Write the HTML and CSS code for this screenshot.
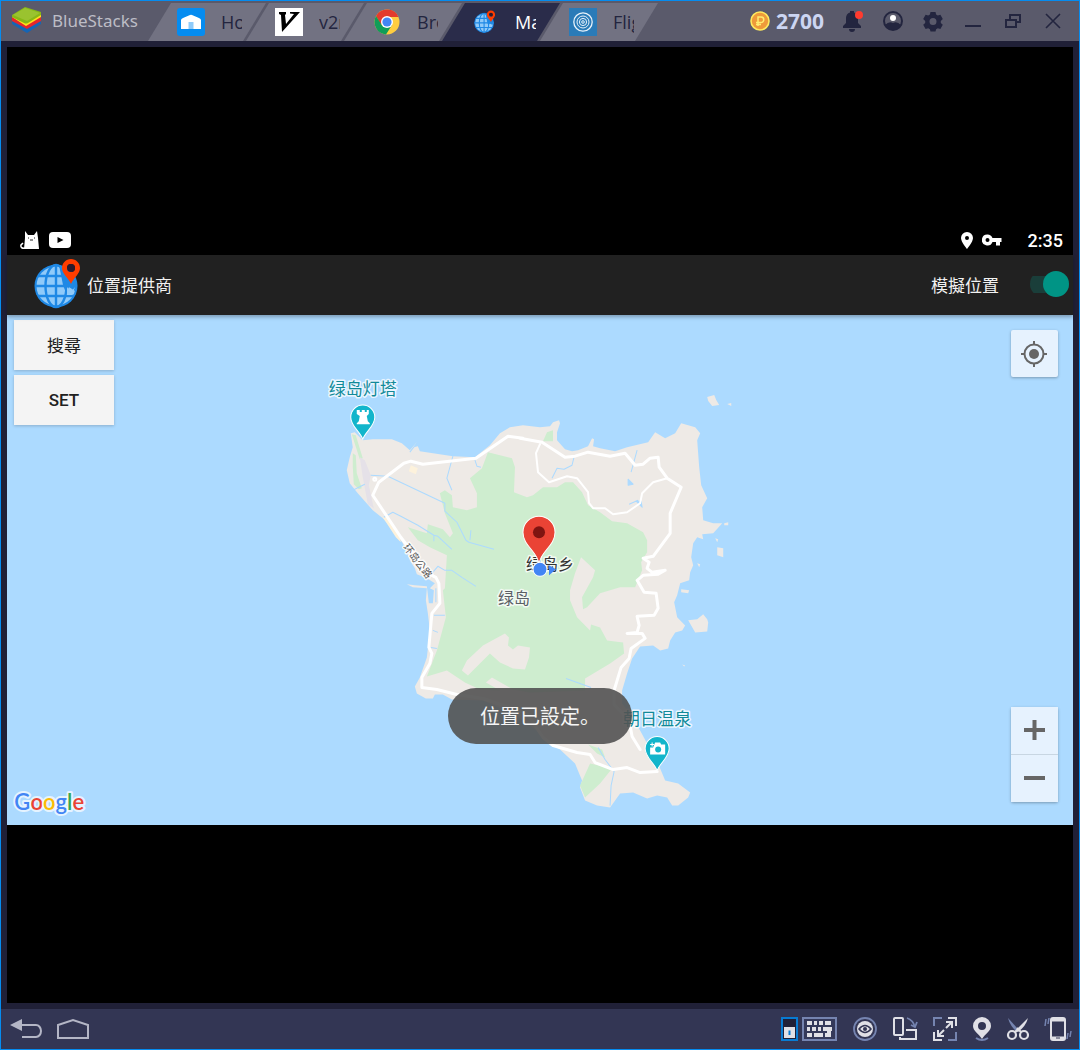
FILE: index.html
```html
<!DOCTYPE html>
<html lang="zh-Hant">
<head>
<meta charset="utf-8">
<meta name="viewport" content="width=device-width, initial-scale=1">
<title>BlueStacks</title>
<link rel="stylesheet" href="styles.css">
</head>
<body>
<svg class="defs" aria-hidden="true">
  <symbol id="globe" viewBox="0 0 48 50">
    <circle cx="22" cy="27" r="21.500" fill="#1e88e5"/>
    <circle cx="22" cy="27" r="19.500" fill="#90caf9"/>
    <g fill="none" stroke="#1e88e5" stroke-width="2.400">
      <path d="M22 6v42M1 27h42M4 17h36M4 37h36"/>
      <ellipse cx="22" cy="27" rx="10.500" ry="21"/>
    </g>
    <path fill="#1e88e5" d="M25 6l12 6 6 14-2 6-6-4-3 6-3-8z"/>
    <path fill="#90caf9" d="M33 28l4 5 4-5-3 8h-5z"/>
    <path fill="#ff3d00" fill-rule="evenodd" d="M37 0c-5 0-9 4-9 9 0 6 6 9 9 16 3-7 9-10 9-16 0-5-4-9-9-9zm0 5a4 4 0 1 1 0 8 4 4 0 0 1 0-8z"/>
    <circle cx="37" cy="9" r="4" fill="#2b1a2c"/>
  </symbol>
</svg>
<div class="window">
  <header class="titlebar">
    <div class="brand">
      <svg width="30" height="28" viewBox="0 0 30 28" aria-hidden="true">
        <path fill="#1565b5" d="M0 18l15 9 14-9v-3L15 21 0 15z"/>
        <path fill="#e5262b" d="M0 15l15 8 14-8v-4L15 18 0 11z"/>
        <path fill="#ffe01b" d="M0 11l14 9 15-9V8L14 16 0 9z"/>
        <path fill="#86b817" d="M0 9L13 1l16 5v3l-13 8q-2 1-4 0L0 11z"/>
        <path fill="#9ac32f" d="M1 9L13 2l15 5-13 8z"/>
      </svg>
      <span>BlueStacks</span>
    </div>
    <nav class="tabs">
      <button class="tab"><svg class="tab-icon" viewBox="0 0 28 28" aria-hidden="true"><rect width="28" height="28" rx="3" fill="#058cf0"/><path fill="#fff" d="M4 12q0-1 2-2l7-3q1-.5 2 0l7 3q2 1 2 2v9H4z"/><path fill="#8fcbfa" d="M11.500 14h5v7h-5z"/></svg><span class="tab-label">Home</span></button>
      <button class="tab"><svg class="tab-icon" viewBox="0 0 28 28" aria-hidden="true"><rect width="28" height="28" fill="#fff"/><path d="M4 4h7v2l-1 1 1 9L19 6l-4-.5V4h10L7 24 6 7 4 6z"/></svg><span class="tab-label">v2rayNG</span></button>
      <button class="tab"><svg class="tab-icon" viewBox="0 0 28 28" aria-hidden="true"><circle cx="14" cy="14" r="12.500" fill="#ffcd40"/><path fill="#e33b2e" d="M3 8a12.500 12.500 0 0 1 22.500 1H14L8 17z"/><path fill="#109d58" d="M3 8a12.500 12.500 0 0 0 10 18.500L19 17l-10 .500z"/><circle cx="14" cy="14" r="6" fill="#fff"/><circle cx="14" cy="14" r="4.600" fill="#4286f5"/></svg><span class="tab-label">Browser</span></button>
      <button class="tab active"><svg class="tab-icon" viewBox="0 0 28 28" aria-hidden="true"><use href="#globe" x="3" y="2" width="22" height="24"/></svg><span class="tab-label">Maps</span></button>
      <button class="tab"><svg class="tab-icon" viewBox="0 0 28 28" aria-hidden="true"><rect width="28" height="28" fill="#2a7bb8"/><g fill="none" stroke="#e7f2fa"><circle cx="14" cy="14" r="9.200" stroke-width="1.300"/><circle cx="14" cy="14" r="6"/><circle cx="14" cy="14" r="3.600"/><circle cx="14" cy="14" r="1.300"/></g></svg><span class="tab-label">Flights</span></button>
    </nav>
    <div class="actions">
      <button class="coins"><svg width="20" height="20" viewBox="0 0 20 20" aria-hidden="true"><circle cx="10" cy="10" r="9" fill="#ee9a3a" stroke="#ffe95e" stroke-width="1.600"/><path d="M8 15V6h3a2.500 2.500 0 0 1 0 5.500H6M6 13.500h5" fill="none" stroke="#ffed70" stroke-width="1.500"/></svg><span>2700</span></button>
      <button class="action" aria-label="Notifications"><svg viewBox="0 0 24 24"><path fill="#23253f" d="M2 19v-2l3-3V9a6 6 0 0 1 4-5.600V2h4v1.400A6 6 0 0 1 17 9v5l3 3v2zm6 1h6a3 3 0 0 1-6 0z"/><circle cx="18" cy="6" r="4" fill="#ff3b2f"/></svg></button>
      <button class="action" aria-label="Account"><svg viewBox="0 0 24 24"><circle cx="12" cy="12" r="9" fill="none" stroke="#23253f" stroke-width="2"/><circle cx="12" cy="9" r="3" fill="#fff"/><path fill="#23253f" d="M4 16q4-4 8-2 4-2 8 2-3 5-8 5t-8-5z"/></svg></button>
      <button class="action" aria-label="Settings"><svg viewBox="0 0 24 24"><path fill="#23253f" fill-rule="evenodd" d="M9.500 3h5l.6 2.600 1.700 1 2.600-.8 2.400 4.200-2 1.900v2l2 1.900-2.400 4.200-2.600-.8-1.700 1-.6 2.300h-5l-.6-2.300-1.700-1-2.600.8-2.400-4.200 2-1.900v-2l-2-1.900 2.400-4.200 2.600.8 1.700-1zM12 9a3.500 3.500 0 1 0 0 7 3.500 3.500 0 0 0 0-7z"/></svg></button>
      <button class="action" aria-label="Minimize"><svg viewBox="0 0 24 24"><path stroke="#23253f" stroke-width="2" d="M4 17h16"/></svg></button>
      <button class="action" aria-label="Restore"><svg viewBox="0 0 24 24"><g fill="none" stroke="#23253f" stroke-width="2"><path d="M5 11h10v7H5zM9 10V6h10v7h-3"/></g></svg></button>
      <button class="action" aria-label="Close"><svg viewBox="0 0 24 24"><path stroke="#23253f" stroke-width="1.600" d="M5 5l14 14M19 5L5 19"/></svg></button>
    </div>
  </header>

  <main class="screen">
    <div class="device">
      <div class="status">
        <svg width="20" height="20" viewBox="0 0 20 20" aria-hidden="true"><path fill="#fff" d="M5 1l3 4h6l3-4 1 7 1 11H4L5 8z"/><path fill="none" stroke="#fff" stroke-width="1.500" d="M6 18q-6 1-5-3l2-2"/><path stroke="#222" d="M8 8h1M14 8h1M10 10h3"/></svg>
        <svg width="22" height="20" viewBox="0 0 22 20" aria-hidden="true"><rect y="2" width="22" height="16" rx="4" fill="#fff"/><path d="M8.500 7v6l6-3z"/></svg>
        <span class="spacer"></span>
        <svg width="12" height="20" viewBox="0 0 12 20" aria-hidden="true"><path fill="#fff" fill-rule="evenodd" d="M6 2a6 6 0 0 0-6 6c0 4 6 11 6 11s6-7 6-11a6 6 0 0 0-6-6zm0 4a2 2 0 1 1 0 4 2 2 0 0 1 0-4z"/></svg>
        <svg width="20" height="20" viewBox="0 0 20 20" aria-hidden="true"><path fill="#fff" fill-rule="evenodd" d="M5.500 4.500a5.500 5.500 0 1 0 5 7.500H14v3.500h4V12h1.500V8h-9a5.500 5.500 0 0 0-5-3.500zm0 3.500a2 2 0 1 1 0 4 2 2 0 0 1 0-4z"/></svg>
        <time>2:35</time>
      </div>
      <div class="appbar">
        <svg width="48" height="50" aria-hidden="true"><use href="#globe"/></svg>
        <h1>位置提供商</h1>
        <label for="mock">模擬位置</label>
        <input id="mock" class="switch" type="checkbox" checked>
      </div>
      <section class="map">
        <svg class="map-canvas" viewBox="7 315 1066 509" preserveAspectRatio="xMidYMid slice" role="img" aria-label="绿岛">
          <path class="land" d="M351 433L355 432 363 440 373 439 392 439 402 443 410 450 417 442 414 447 418 446 420 451 453 456 475 457 490 445 500 433 510 427 523 425 540 427 550 426 553 422 559 420 560 423 557 432 557 440 565 449 572 451 578 450 588 446 592 438 594 439 593 446 600 448 615 451 627 447 648 442 655 432 665 438 675 433 681 423 695 427 700 433 697 440 699 467 701 485 707 498 702 507 703 520 713 523 722 523 713 533 702 534 703 539 697 537 693 543 691 557 693 565 690 572 689 580 680 583 677 595 674 602 677 617 685 625 682 630 675 632 670 640 668 648 660 650 653 645 640 646 632 658 627 673 622 690 622 703 630 713 640 730 647 743 660 768 665 780 678 783 690 792 688 797 678 805 672 805 667 797 657 795 647 798 633 792 620 793 615 800 610 807 597 805 585 800 580 787 582 780 575 763 560 749 553 745 537 730 513 713 483 700 452 699 443 694 435 694 433 698 426 698 417 693 415 686 420 677 427 657 430 630 428 613 426 600 427 588 413 587 407 584 415 585 427 586 429 603 433 603 434 590 430 588 435 583 427 578 417 574 415 568 410 560 403 543 392 528 383 518 373 510 358 493 350 483 347 470 350 457 353 447z"/>
          <path class="land" d="M707 397l7-2 2 5 3 5-7 1-4-5zM727 404l4-1 0 3zM688 620l9-1 6-5 4 5 1 3-1 9-12 1zM681 589l8 1-1 3-7-1zM717 547l6 1 0 9-6-2zM715 538l3 1-1 3zM697 563l3 1-1 3zM724 523l4-1 0 3-4 0zM682 664l3 1-1 1z"/>
          <path class="wood" d="M488 452L512 458 515 467 514 492 527 497 533 495 543 487 557 487 565 482 573 482 582 492 588 505 600 512 612 521 627 523 643 532 647 540 647 552 641 562 642 570 635 587 620 587 600 593 587 607 583 609 582 597 593 577 595 570 581 557 575 573 570 590 570 600 577 617 590 630 591 624 600 627 607 640 623 642 624 653 610 663 585 678 585 690 530 692 513 689 492 677 486 682 500 690 480 689 465 682 447 670 427 676 437 650 446 617 443 590 445 588 447 555 430 547 418 540 408 527 427 533 428 524 443 529 450 537 453 533 445 513 440 493 445 490 452 495 453 507 467 510 477 507 477 493 470 478 482 468z"/>
          <path class="wood" d="M353 453l3 2 1 18 5 15-3 1-5-5-1-18zM352 434l4 1 7 23-3 1zM543 441l4-9 6-2 0 11zM590 763l22 5-12 15-15 14-5-12zM588 744l14 5 3 8-8-4z"/>
          <path class="airport" d="M360 457l5 3 6 15-2 10 5 23-6-4-5-27z"/>
          <path class="land" d="M462 670l5-10 16-15 22-12 4 4-1 8 5 4 5-4 12 2-1 10-4 12-12-1-13-6-10-9-10 10-12 12z"/>
          <path class="sand" d="M411 465l7 3-2 6-7-3zM383 517l13 20 5 5-1-5-12-20z"/>
          <g class="stream">
            <path d="M371 475l17 1 57 27 0 8 12 11 9 18 3 2 25 7M470 540l1-10M384 517l9-5 8 4 17 9 16 10 4 1 14 13M434 541l0-6M453 456l-6 22 5 12M475 460l2 6 4 1M345 494l20-10M432 573l6-7 7 4 7 0 10 7 14 9M574 457l-2 8-8 4-7-1-5 10M637 450l-6 22M629 504l9-4M434 615h11M433 630l5 2M431 647l6 1M566 678l25 9M598 747l7 12 9 12-3 14-1 20M410 452l7-9M436 588l0 14"/>
            <path class="pond" d="M628 479l5 5-5 1zM636 501l5 0 1 6-3-3z"/>
          </g>
          <g class="road">
            <path class="minor" d="M540 444l-4 9 2 19 11 10 18-6 10 2 11 14 1 11 4 5 12 0 8 6 14-2 13-9 2-10 11-11 14-4"/>
            <path d="M520 438l22 4 23 15 10-1 13-4 22 4 15-3 10 12 8-1 7-6 8-1 1 10 8 11 14 9-11 26 0 20-17 23-10 2 6 4-2 6 5 4 13-2-7 4-15 1-6 5 7 12 12 1 2 15-4 7-17 1 2 9-2 7-10 1 15 0 3 5-14 10-2 10-8 9-7 23 0 14 15 16 3 16 8 13M657 771l-17 1-13-5-14 2-18-7-5-8-13-2-24-7-10-8-16-24-44-15-26-4-20-5-15-2 0-10 8-14 2-10-3-6 3-34 8-10-1-20-3-6-8-4-27-36-28-42 6-13 25-19 7-2 12 3 53-6 32-22 15 2"/>
            <circle cx="375" cy="479" r="1"/>
          </g>
          <text class="label street" x="403" y="547" transform="rotate(53 403 547)">环岛公路</text>
          <text class="label poi" x="329" y="395">绿岛灯塔</text>
          <text class="label poi" x="623" y="725">朝日温泉</text>
          <text class="label town" x="526" y="570">绿岛乡</text>
          <text class="label region" x="498" y="604">绿岛</text>
          <g transform="translate(363 439)">
            <path class="poi-pin" d="M0 0C-3-8-12-13-12-22a12 12 0 0 1 24 0C12-13 3-8 0 0z"/>
            <path fill="#fff" d="M-6-29h3v2h2v-2h3v2h2v-2h2v4l-2 2 1 5 2 2v1H-6v-1l2-2 1-5-3-2z"/>
          </g>
          <g transform="translate(657 770)">
            <path class="poi-pin" d="M0 0C-3-8-12-13-12-22a12 12 0 0 1 24 0C12-13 3-8 0 0z"/>
            <path fill="#fff" d="M-2-28h5l1 2h4v10H-7v-7h3z"/><circle cx="1" cy="-21" r="3" fill="#12b5cb"/><path stroke="#fff" d="M-7-26h4M-5-28v4"/>
          </g>
          <path class="marker" d="M539 564c-1-13-16-18-16-32a16 16 0 0 1 32 0c0 14-15 19-16 32z"/>
          <circle cx="539" cy="532" r="6" fill="#7f1411"/>
          <path fill="#4285f4" d="M549 565l7 4-7 6z"/>
          <circle class="me" cx="540" cy="569" r="7"/>
          <text class="logo" x="15" y="809"><tspan fill="#4285f4">G</tspan><tspan fill="#ea4335">o</tspan><tspan fill="#fbbc05">o</tspan><tspan fill="#4285f4">g</tspan><tspan fill="#34a853">l</tspan><tspan fill="#ea4335">e</tspan></text>
        </svg>
        <div class="map-buttons">
          <button>搜尋</button>
          <button class="latin">SET</button>
        </div>
        <button class="control locate" aria-label="My location"><svg width="28" height="28" viewBox="0 0 28 28"><circle cx="13" cy="14" r="5" fill="#666"/><g fill="none" stroke="#666" stroke-width="2"><circle cx="13" cy="14" r="9.500"/><path d="M13 1v4M13 23v4M0 14h4M22 14h4"/></g></svg></button>
        <div class="zoom">
          <button class="control" aria-label="Zoom in"><svg width="22" height="22" viewBox="0 0 22 22"><path stroke="#666" stroke-width="4" d="M0 11h21M10.500 1v20"/></svg></button>
          <button class="control" aria-label="Zoom out"><svg width="22" height="22" viewBox="0 0 22 22"><path stroke="#666" stroke-width="4" d="M0 11h21"/></svg></button>
        </div>
        <div class="toast" role="status" lang="zh-Hans">位置已設定。</div>
      </section>
    </div>
  </main>

  <footer class="toolbar">
    <button aria-label="Back"><svg width="32" height="24" viewBox="0 0 32 24"><path fill="#b4b6c6" d="M0 8l12-6v12z"/><path fill="none" stroke="#b4b6c6" stroke-width="2" d="M10 8h16a5 6 0 0 1 0 12H12"/></svg></button>
    <button aria-label="Home"><svg width="34" height="24" viewBox="0 0 34 24"><path fill="none" stroke="#b4b6c6" stroke-width="2" d="M2 21V8l15-5 15 5v13z"/></svg></button>
    <span class="spacer"></span>
    <button aria-label="Keyboard controls"><svg width="58" height="26" viewBox="0 0 58 26"><path fill="#202037" stroke="#087bd2" stroke-width="2" d="M2 2h15v22H2z"/><path fill="#e0e0e6" d="M4 11h11v11H4z"/><path fill="#087bd2" d="M8.500 14.500h2V19h-2z"/><path fill="#34395a" stroke="#7584b0" stroke-width="2" d="M23 2h33v22H23z"/><path fill="none" stroke="#e0e0e6" stroke-width="4" d="M27 7h5m2 0h3m2 0h4m2 0h6M27 13h3m2 0h4m2 0h3m2 0h4m2 0h3M27 19h5m2 0h9m2 0h6M49 11v10"/></svg></button>
    <button aria-label="Eye"><svg width="26" height="26" viewBox="0 0 26 26"><circle cx="13" cy="13" r="11" fill="none" stroke="#7584b0" stroke-width="1.800"/><circle cx="13" cy="13" r="8" fill="#e0e0e6"/><path fill="none" stroke="#333654" stroke-width="1.500" d="M7 13q6-7 12 0-6 7-12 0z"/><circle cx="13" cy="13" r="2" fill="#333654"/></svg></button>
    <button aria-label="Rotate"><svg width="26" height="26" viewBox="0 0 26 26"><g fill="none" stroke="#e0e0e6" stroke-width="2"><rect x="2" y="2" width="9" height="17" rx="1"/><path d="M14 14h10v9H8v-2"/></g><path fill="none" stroke="#7584b0" stroke-width="1.800" d="M15 2q6 2 8 9m-4-2l4 2 2-5"/></svg></button>
    <button aria-label="Full screen"><svg width="26" height="26" viewBox="0 0 26 26"><g fill="none" stroke-width="2"><path stroke="#7584b0" d="M2 10V2h8M24 16v8h-8"/><path stroke="#e0e0e6" d="M16 2h8v8M10 24H2v-8M14 12l5-5M14 6h6v6M12 14l-5 5M12 20H6v-6"/></g></svg></button>
    <button aria-label="Location"><svg width="20" height="26" viewBox="0 0 20 26"><path fill="none" stroke="#7584b0" stroke-width="2" d="M4 22q6 4 12 0"/><path fill="#e0e0e6" fill-rule="evenodd" d="M10 1a9 9 0 0 0-9 9c0 5 6 8 9 13 3-5 9-8 9-13a9 9 0 0 0-9-9zm0 5a4 4 0 1 1 0 8 4 4 0 0 1 0-8z"/></svg></button>
    <button aria-label="Screenshot"><svg width="24" height="26" viewBox="0 0 24 26"><path fill="#7584b0" d="M2 2l11 12-2 2Q4 10 2 2z"/><path fill="#e0e0e6" d="M22 2L10 14l2 2q8-6 10-14z"/><g fill="none" stroke="#e0e0e6" stroke-width="2.200"><circle cx="6" cy="19" r="4"/><circle cx="18" cy="19" r="4"/><path d="M9 16l4-3M15 16l-4-4"/></g></svg></button>
    <button aria-label="Shake"><svg width="28" height="26" viewBox="0 0 28 26"><rect x="7" y="2" width="14" height="22" rx="2" fill="none" stroke="#e0e0e6" stroke-width="2"/><path stroke="#e0e0e6" stroke-width="3" d="M8 4h12M8 22h12"/><path stroke="#333654" d="M12 22h4"/><path stroke="#7584b0" stroke-width="1.500" d="M5 2L4 8M2 3L1 10M24 17l-1 6M27 15l-1 6"/></svg></button>
  </footer>
</div>
</body>
</html>
```
FILE: styles.css
```css
* { box-sizing: border-box; }
body {
  margin: 0;
  font-family: Roboto, "Noto Sans CJK TC", sans-serif;
}
button {
  margin: 0;
  padding: 0;
  border: 0;
  background: none;
  color: inherit;
  font: inherit;
}
svg { display: block; flex: none; }
.defs { position: absolute; width: 0; height: 0; }
.spacer { flex: 1; }

.window {
  display: flex;
  flex-direction: column;
  min-height: 100vh;
  border: 1px solid #058cf0;
  background: #202037;
}

/* Title bar */
.titlebar {
  display: flex;
  height: 40px;
  background: #5a5a6b;
  font-family: "Open Sans", "Noto Sans", sans-serif;
}
.brand {
  display: flex;
  align-items: center;
  gap: 10px;
  width: 147px;
  padding: 0 0 2px 11px;
  font-family: "Noto Sans", sans-serif;
  font-size: 17px;
  color: #bdbdc6;
}
.tabs { display: flex; padding-top: 2px; }
.tab {
  display: flex;
  align-items: center;
  gap: 16px;
  width: 118px;
  padding: 0 24px 0 29px;
  clip-path: polygon(23px 0, 100% 0, 95px 100%, 0 100%);
  background: #727282;
  font-size: 18px;
  color: #23253f;
}
.tab + .tab { margin-left: -20px; }
.tab.active { background: #2a2c4a; color: #fff; }
.tab-icon { width: 28px; height: 28px; }
.tab-label {
  width: 21px;
  overflow: hidden;
  text-align: left;
  white-space: nowrap;
}
.actions {
  display: flex;
  margin-left: auto;
  padding-right: 6px;
}
.coins {
  display: flex;
  align-items: center;
  gap: 6px;
  padding-right: 9px;
  font-size: 21px;
  font-weight: 700;
  color: #ccd5f2;
}
.action {
  display: grid;
  place-items: center;
  width: 40px;
}
.action svg { width: 24px; height: 24px; }

/* Emulated device */
.screen {
  display: flex;
  flex: 1;
  flex-direction: column;
  justify-content: center;
  margin: 6px;
  background: #000;
}
.device {
  display: flex;
  flex-direction: column;
  aspect-ratio: 16 / 9;
}
.status {
  display: flex;
  align-items: center;
  gap: 9px;
  height: 30px;
  padding: 0 10px 0 13px;
  color: #fff;
}
.status time {
  padding-left: 17px;
  font-size: 18px;
  font-weight: 500;
}
.appbar {
  display: flex;
  z-index: 1;
  align-items: center;
  height: 60px;
  padding: 0 4px 2px 27px;
  background: #212121;
  box-shadow: 0 2px 4px rgba(0, 0, 0, .3);
  font-size: 17px;
  color: #f2f2f2;
}
.appbar h1 {
  flex: 1;
  margin: 0 0 0 5px;
  font-size: 17px;
  font-weight: 400;
}
.switch {
  display: flex;
  align-items: center;
  justify-content: flex-end;
  width: 39px;
  height: 26px;
  margin: 0 0 0 31px;
  border-radius: 13px;
  appearance: none;
  background: linear-gradient(#1a3e3a, #1a3e3a) center / 100% 17px no-repeat;
}
.switch::before {
  width: 26px;
  height: 26px;
  border-radius: 50%;
  background: #009485;
  content: "";
}

/* Map */
.map {
  position: relative;
  flex: 1;
  min-height: 0;
  overflow: hidden;
  background: #acdaff;
}
.map-canvas {
  position: absolute;
  width: 100%;
  height: 100%;
}
.land { fill: #eeeae6; }
.wood { fill: #ceedcf; }
.airport { fill: #e5e1e8; }
.sand { fill: #fdf2dc; }
.stream {
  fill: none;
  stroke: #acdaff;
  stroke-width: 1;
  stroke-linejoin: round;
}
.pond { fill: #acdaff; }
.road {
  fill: none;
  stroke: #fff;
  stroke-width: 3;
  stroke-linejoin: round;
  stroke-linecap: round;
}
.minor { stroke-width: 2; }
.label {
  font-family: "Noto Sans CJK SC", sans-serif;
  font-size: 16px;
  paint-order: stroke;
  stroke: rgba(255, 255, 255, .75);
  stroke-width: 3px;
  stroke-linejoin: round;
}
.poi { font-size: 17px; fill: #118a99; }
.street { font-size: 10px; fill: #555; }
.town { fill: #333; }
.region { fill: #5b6066; }
.poi-pin { fill: #12b5cb; stroke: #fff; stroke-width: 1; }
.marker { fill: #ea4335; stroke: #fff; stroke-width: 1; }
.me { fill: #4285f4; stroke: #fff; stroke-width: 1; }
.logo {
  font-family: Lato, sans-serif;
  font-size: 22px;
  font-weight: 600;
  paint-order: stroke;
  stroke: rgba(255, 255, 255, .7);
  stroke-width: 4px;
  stroke-linejoin: round;
}
.map-buttons {
  position: absolute;
  top: 5px;
  left: 7px;
  display: flex;
  flex-direction: column;
  gap: 5px;
}
.map-buttons button {
  width: 100px;
  height: 50px;
  padding-bottom: 2px;
  background: #f4f4f4;
  box-shadow: 0 1px 3px rgba(0, 0, 0, .2);
  font-size: 17px;
  color: #212121;
}
.map-buttons .latin { padding: 0; font-weight: 500; }
.control {
  display: grid;
  place-items: center;
  width: 47px;
  height: 47px;
  background: #e6f2fe;
}
.locate, .zoom {
  position: absolute;
  right: 15px;
  border-radius: 2px;
  box-shadow: 0 1px 3px rgba(0, 0, 0, .3);
}
.locate { top: 15px; }
.zoom {
  bottom: 23px;
  display: grid;
  gap: 1px;
  background: #c8d6e2;
}
.toast {
  position: absolute;
  bottom: 81px;
  left: 50%;
  padding: 0 32px;
  transform: translateX(-50%);
  border-radius: 28px;
  background: rgba(82, 82, 82, .9);
  font-family: "Noto Sans CJK SC", sans-serif;
  font-size: 20px;
  line-height: 56px;
  white-space: nowrap;
  color: #f5f5f5;
}

/* Emulator toolbar */
.toolbar {
  display: flex;
  align-items: center;
  gap: 14px;
  height: 40px;
  padding: 0 7px 0 9px;
  background: #333654;
}
```
